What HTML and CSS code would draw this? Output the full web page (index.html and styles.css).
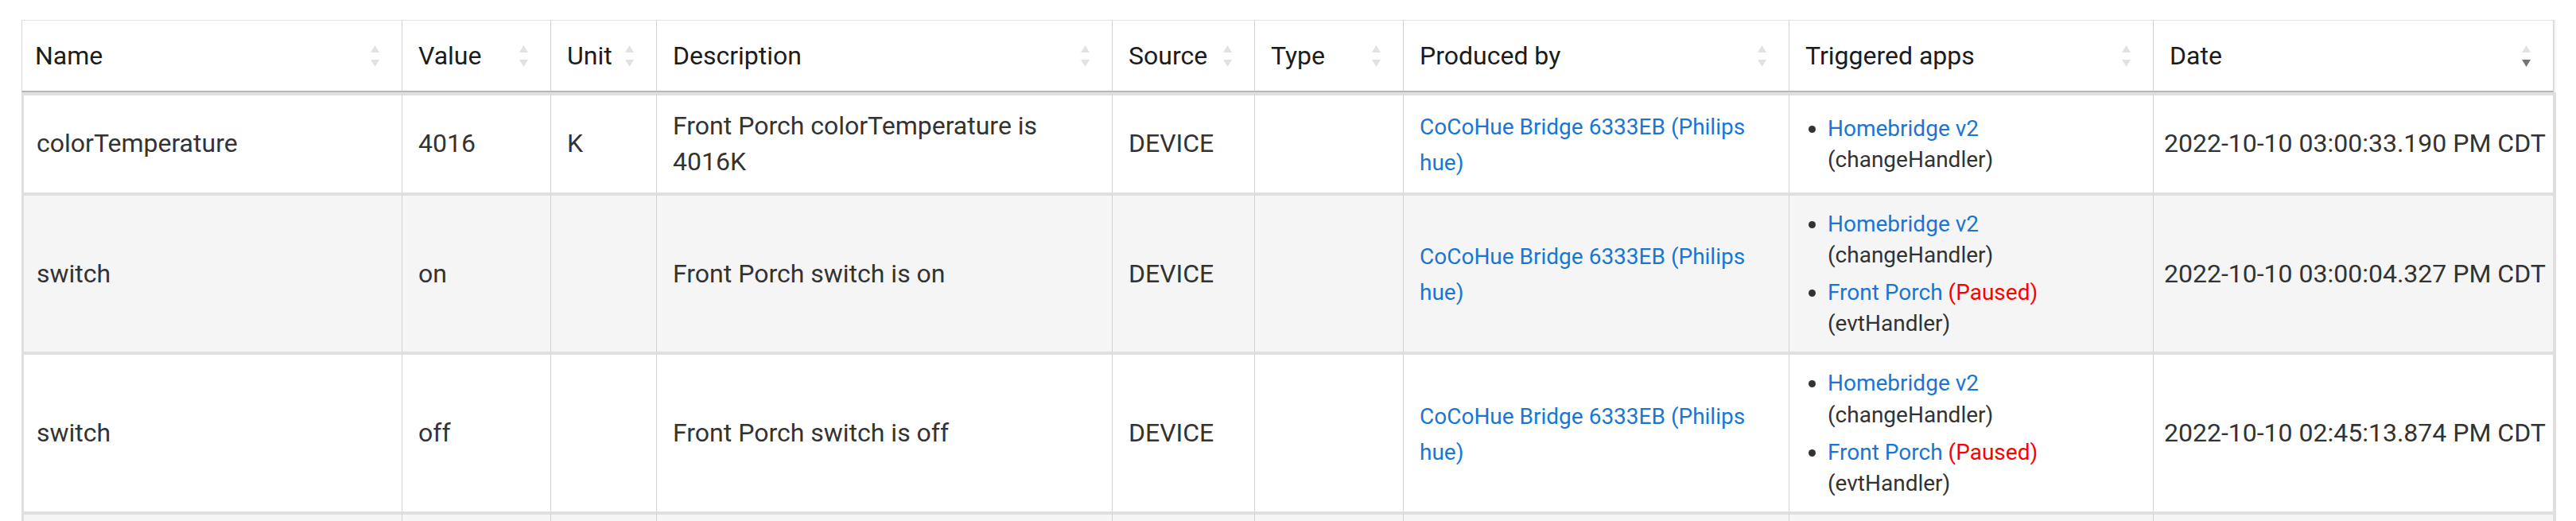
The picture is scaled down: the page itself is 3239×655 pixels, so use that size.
FILE: index.html
```html
<!DOCTYPE html>
<html lang="en">
<head>
<meta charset="utf-8">
<title>Events</title>
<link rel="stylesheet" href="styles.css">
</head>
<body>
<div class="page">
  <table class="events">
    <thead>
      <tr>
        <th class="w-name"><div class="th-inner"><span>Name</span><svg class="sort" viewBox="0 0 11 27" width="11" height="27"><polygon class="s-off" points="5.5,0 11,9 0,9"/><polygon class="s-off" points="0,18 11,18 5.5,27"/></svg></div></th>
        <th class="w-value"><div class="th-inner"><span>Value</span><svg class="sort" viewBox="0 0 11 27" width="11" height="27"><polygon class="s-off" points="5.5,0 11,9 0,9"/><polygon class="s-off" points="0,18 11,18 5.5,27"/></svg></div></th>
        <th class="w-unit"><div class="th-inner"><span>Unit</span><svg class="sort" viewBox="0 0 11 27" width="11" height="27"><polygon class="s-off" points="5.5,0 11,9 0,9"/><polygon class="s-off" points="0,18 11,18 5.5,27"/></svg></div></th>
        <th class="w-desc"><div class="th-inner"><span>Description</span><svg class="sort" viewBox="0 0 11 27" width="11" height="27"><polygon class="s-off" points="5.5,0 11,9 0,9"/><polygon class="s-off" points="0,18 11,18 5.5,27"/></svg></div></th>
        <th class="w-source"><div class="th-inner"><span>Source</span><svg class="sort" viewBox="0 0 11 27" width="11" height="27"><polygon class="s-off" points="5.5,0 11,9 0,9"/><polygon class="s-off" points="0,18 11,18 5.5,27"/></svg></div></th>
        <th class="w-type"><div class="th-inner"><span>Type</span><svg class="sort" viewBox="0 0 11 27" width="11" height="27"><polygon class="s-off" points="5.5,0 11,9 0,9"/><polygon class="s-off" points="0,18 11,18 5.5,27"/></svg></div></th>
        <th class="w-prod"><div class="th-inner"><span>Produced by</span><svg class="sort" viewBox="0 0 11 27" width="11" height="27"><polygon class="s-off" points="5.5,0 11,9 0,9"/><polygon class="s-off" points="0,18 11,18 5.5,27"/></svg></div></th>
        <th class="w-trig"><div class="th-inner"><span>Triggered apps</span><svg class="sort" viewBox="0 0 11 27" width="11" height="27"><polygon class="s-off" points="5.5,0 11,9 0,9"/><polygon class="s-off" points="0,18 11,18 5.5,27"/></svg></div></th>
        <th class="w-date"><div class="th-inner"><span>Date</span><svg class="sort" viewBox="0 0 11 27" width="11" height="27"><polygon class="s-off" points="5.5,0 11,9 0,9"/><polygon class="s-on" points="0,18 11,18 5.5,27"/></svg></div></th>
      </tr>
    </thead>
    <tbody>
      <tr>
        <td>colorTemperature</td>
        <td>4016</td>
        <td>K</td>
        <td>Front Porch colorTemperature is 4016K</td>
        <td>DEVICE</td>
        <td></td>
        <td><a class="link small" href="#">CoCoHue Bridge 6333EB (Philips hue)</a></td>
        <td>
          <ul class="apps">
            <li><a class="link" href="#">Homebridge v2</a> (changeHandler)</li>
          </ul>
        </td>
        <td class="date">2022-10-10 03:00:33.190 PM CDT</td>
      </tr>
      <tr class="alt">
        <td>switch</td>
        <td>on</td>
        <td></td>
        <td>Front Porch switch is on</td>
        <td>DEVICE</td>
        <td></td>
        <td><a class="link small" href="#">CoCoHue Bridge 6333EB (Philips hue)</a></td>
        <td>
          <ul class="apps">
            <li><a class="link" href="#">Homebridge v2</a> (changeHandler)</li>
            <li><a class="link" href="#">Front Porch</a> <span class="paused">(Paused)</span> (evtHandler)</li>
          </ul>
        </td>
        <td class="date">2022-10-10 03:00:04.327 PM CDT</td>
      </tr>
      <tr>
        <td>switch</td>
        <td>off</td>
        <td></td>
        <td>Front Porch switch is off</td>
        <td>DEVICE</td>
        <td></td>
        <td><a class="link small" href="#">CoCoHue Bridge 6333EB (Philips hue)</a></td>
        <td>
          <ul class="apps">
            <li><a class="link" href="#">Homebridge v2</a> (changeHandler)</li>
            <li><a class="link" href="#">Front Porch</a> <span class="paused">(Paused)</span> (evtHandler)</li>
          </ul>
        </td>
        <td class="date">2022-10-10 02:45:13.874 PM CDT</td>
      </tr>
      <tr class="alt filler">
        <td></td><td></td><td></td><td></td><td></td><td></td><td></td><td></td><td class="date"></td>
      </tr>
    </tbody>
  </table>
</div>
</body>
</html>
```

FILE: styles.css
```css
html, body {
  margin: 0;
  padding: 0;
  background: #ffffff;
}

body {
  font-family: Roboto, "Helvetica Neue", Arial, sans-serif;
  overflow: hidden;
}

.page {
  padding: 25px 0 0 27px;
}

.events {
  border-collapse: separate;
  border-spacing: 0;
  table-layout: fixed;
  width: 3184px;
  font-size: 32px;
}

.events th {
  box-sizing: border-box;
  font-weight: 400;
  text-align: left;
  color: #1c1c1c;
  line-height: 48px;
  padding: 20px 28px 20px 20px;
  border-top: 1px solid #e3e3e3;
  border-right: 1px solid #d3d3d3;
  border-bottom: 2px solid #b6b6b6;
  vertical-align: middle;
  background: #ffffff;
}

.events th:first-child {
  border-left: 1px solid #d6d6d6;
  padding-left: 16px;
}

.events th:last-child {
  box-shadow: 2px 0 0 #ececec;
}

.th-inner {
  display: flex;
  align-items: center;
  justify-content: space-between;
  white-space: nowrap;
}

.sort {
  display: block;
  flex: none;
}

.s-off {
  fill: #e2e2e2;
}

.s-on {
  fill: #737373;
}

.w-name { width: 479px; }
.w-value { width: 187px; }
.w-unit { width: 133px; }
.w-desc { width: 573px; }
.w-source { width: 179px; }
.w-type { width: 187px; }
.w-prod { width: 485px; }
.w-trig { width: 458px; }
.w-date { width: 503px; }

.events td {
  padding: 16px 20px;
  line-height: 1.4;
  color: #333333;
  border-top: 4px solid #dfdfdf;
  border-right: 1px solid #d3d3d3;
  vertical-align: middle;
  background: #ffffff;
}

.events td:first-child {
  border-left: 3px solid #dfdfdf;
  padding-left: 16px;
}

.events td:last-child {
  border-right: 1px solid #dfdfdf;
  box-shadow: 3px 0 0 #dfdfdf;
}

.events tr.alt td {
  background: #f5f5f5;
}

.events tr.filler td {
  height: 120px;
}

.events td.date {
  white-space: nowrap;
  padding-left: 13px;
  padding-right: 6px;
}

.link {
  color: #1976d2;
  text-decoration: none;
}

.small {
  font-size: 28px;
}

.apps {
  margin: 0;
  padding-left: 28px;
  font-size: 28px;
  line-height: 1.4;
  list-style: disc;
  color: #333333;
}

.apps li + li {
  margin-top: 8px;
}

.paused {
  color: #ff0000;
}
```
